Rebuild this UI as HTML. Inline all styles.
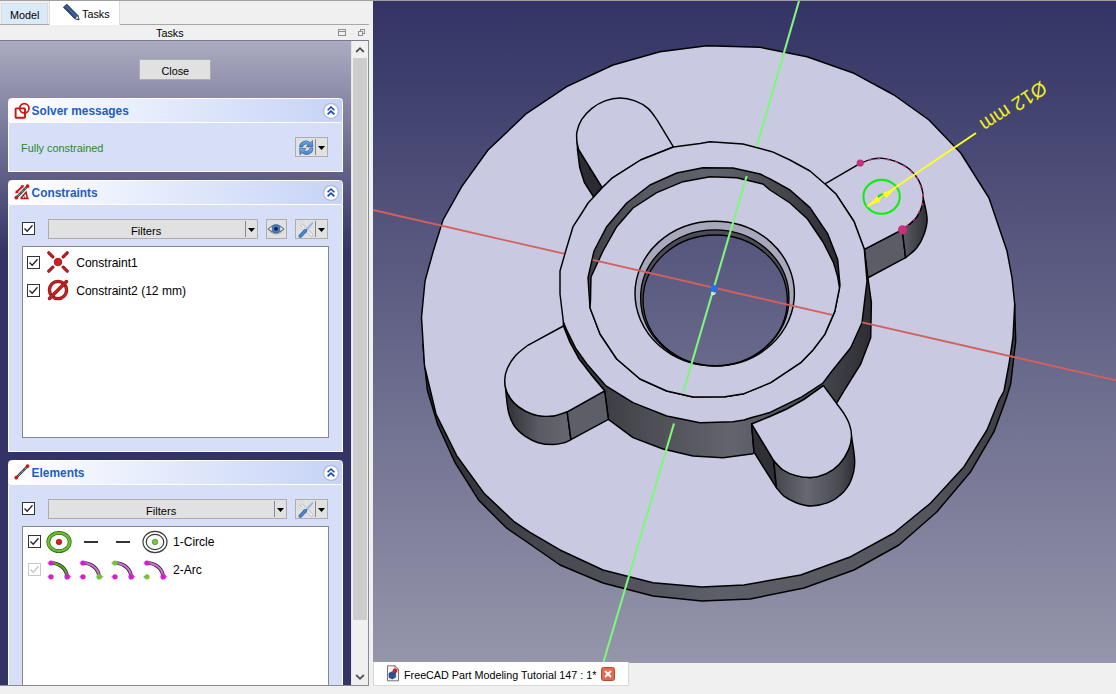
<!DOCTYPE html>
<html><head><meta charset="utf-8"><title>FreeCAD</title>
<style>
html,body{margin:0;padding:0}
body{width:1116px;height:694px;position:relative;overflow:hidden;background:#f0f0f0;font-family:"Liberation Sans",sans-serif;font-size:11px;color:#000}
div,span{box-sizing:content-box}
.abs{position:absolute}
.txt{position:absolute;white-space:nowrap;line-height:1}
#scroll{position:absolute;left:0;top:41px;width:351px;height:644px;overflow:hidden;background:linear-gradient(to bottom,#ababc1 0px,#333365 212px,#333365 100%)}
.ghead{position:absolute;left:8px;width:333px;height:23px;border:1px solid #fff;border-bottom:1px solid #fff;border-radius:3.5px 3.5px 0 0;background:linear-gradient(to right,#ffffff 0%,#c6d3f7 100%)}
.gt{position:absolute;left:22.6px;top:7px;font-weight:bold;color:#215dc6;font-size:11.9px;line-height:1;white-space:nowrap}
.gbody{position:absolute;left:8px;width:333px;background:#d6dff7;border:1px solid #fff;border-top:none}
.tb{position:absolute;height:18px;border:1px solid #adadad;background:#e1e1e1}
.list{position:absolute;left:22px;width:305px;background:#fff;border:1px solid #828790}
.li{position:absolute;font-size:12.05px;line-height:1;white-space:nowrap;color:#000}
</style></head><body>
<!-- top border -->
<div class="abs" style="left:0;top:0;width:1116px;height:1px;background:#a0a0a0"></div>
<!-- tab bar -->
<div class="abs" style="left:0;top:24px;width:369px;height:1px;background:#a6a6a6"></div>
<div class="abs" style="left:1px;top:3px;width:47px;height:21px;background:#d9eaf9;border:1px solid #dadada;border-bottom:none;box-sizing:border-box"></div>
<div class="txt" style="left:10px;top:9.5px;font-size:10.8px">Model</div>
<div class="abs" style="left:49px;top:1px;width:71px;height:24px;background:#fff;border-left:1px solid #dcdcdc;border-right:1px solid #dcdcdc;box-sizing:border-box"></div>
<svg class="abs" style="left:62px;top:3px" width="18" height="18" viewBox="0 0 18 18"><path d="M1.4,4.2 L4.8,1.2 L16,12.6 L17,16.8 L12.6,15.6 Z" fill="#2a4a82" stroke="#1a2a52" stroke-width="0.8"/><path d="M12.6,15.6 L16,12.6 L17,16.8 Z" fill="#ececec" stroke="#333" stroke-width="0.6"/><path d="M15.6,15.4 L17,16.8 L15.2,16.4 Z" fill="#222"/><path d="M3.4,2.6 L14.6,14" stroke="#4c70ac" stroke-width="1.1"/></svg>
<div class="txt" style="left:82px;top:8.5px;font-size:10.8px">Tasks</div>
<!-- dock title -->
<div class="txt" style="left:156px;top:27.5px;font-size:10.8px">Tasks</div>
<svg class="abs" style="left:337px;top:28px" width="10" height="10" viewBox="0 0 10 10"><rect x="1.5" y="1.5" width="7" height="6" fill="none" stroke="#8e8e8e" stroke-width="1"/><path d="M1.5,3.5 h7" stroke="#8e8e8e" stroke-width="1"/></svg>
<svg class="abs" style="left:356px;top:28px" width="10" height="10" viewBox="0 0 10 10"><rect x="4.5" y="1.5" width="4" height="4" fill="none" stroke="#8e8e8e" stroke-width="1"/><rect x="2.5" y="3.5" width="4" height="4" fill="#f0f0f0" stroke="#8e8e8e" stroke-width="1"/></svg>
<!-- scroll area -->
<div class="abs" style="left:0;top:40px;width:369px;height:1px;background:#7a7a8a"></div>
<div id="scroll">
 <div class="tb" style="left:139px;top:18px;width:70px;height:19px;border-color:#adadad"><div class="txt" style="left:21.5px;top:5.8px;font-size:10.8px">Close</div></div>
 <div class="ghead" style="top:57px"><span class="gt">Solver messages</span><svg width="18" height="18" viewBox="0 0 18 18" style="position:absolute;left:5px;top:2.6px"><rect x="1.6" y="6.4" width="9.4" height="9.4" rx="0.8" fill="none" stroke="#cc1414" stroke-width="1.9"/><circle cx="10.3" cy="6.3" r="4.7" fill="none" stroke="#cc1414" stroke-width="1.7"/></svg><svg width="18" height="18" viewBox="0 0 18 18" style="position:absolute;left:313.3px;top:2.6px"><circle cx="9" cy="9" r="7.5" fill="#fff" stroke="#b6bcdc" stroke-width="1.5"/><path d="M5.6,8.3 L9,5 L12.4,8.3 M5.6,12.4 L9,9.1 L12.4,12.4" fill="none" stroke="#1444b8" stroke-width="1.6"/></svg></div><div class="gbody" style="top:82px;height:48px"></div>
 <div class="txt" style="left:21px;top:101.5px;font-size:10.9px;color:#1f8a1f">Fully constrained</div>
 <div class="tb" style="left:295px;top:96px;width:31px"><svg width="16.5" height="17" viewBox="0 0 18 18.4" style="position:absolute;left:1.5px;top:0.6px"><defs><linearGradient id="rf" x1="0" y1="0" x2="0" y2="1"><stop offset="0" stop-color="#7ab0e8"/><stop offset="1" stop-color="#3c7cc8"/></linearGradient></defs><path d="M1.6,8.6 A7,6.6 0 0 1 13.6,4 L15.8,1.6 L16.2,8.8 L9.2,8.4 L11.4,6.2 A3.8,3.4 0 0 0 5.2,8.6 Z" fill="url(#rf)" stroke="#3566a4" stroke-width="0.8"/><path d="M16.4,10.2 A7,6.6 0 0 1 4.4,14.8 L2.2,17.2 L1.8,10 L8.8,10.4 L6.6,12.6 A3.8,3.4 0 0 0 12.8,10.2 Z" fill="url(#rf)" stroke="#3566a4" stroke-width="0.8"/></svg><div style="position:absolute;left:19px;top:1px;width:1px;height:16px;background:#8a8a8a"></div><svg width="7" height="4" viewBox="0 0 7 4" style="position:absolute;left:22px;top:8px"><path d="M0,0 L7,0 L3.5,4 Z" fill="#000"/></svg></div>
 <div class="ghead" style="top:139px"><span class="gt">Constraints</span><svg width="18" height="18" viewBox="0 0 18 18" style="position:absolute;left:5px;top:3px"><path d="M2.3,13.6 L13.6,2.1" stroke="#3a3a3a" stroke-width="2.3"/><path d="M2.3,13.6 L13.6,2.1" stroke="#f4f4f4" stroke-width="1" stroke-dasharray="1 1"/><circle cx="2.3" cy="13.7" r="1.9" fill="#d01414"/><circle cx="13.6" cy="2.1" r="1.9" fill="#d01414"/><path d="M2.6,8 L8.6,2.2" stroke="#dc1010" stroke-width="1.9"/><path d="M1.2,9.4 L1.9,5.9 L4.6,8.7 Z M9.9,0.9 L9.3,4.3 L6.5,1.5 Z" fill="#dc1010"/><path d="M6.6,14.4 L14.8,14.4 M6.6,14.4 L12.7,7.6 M12.2,9 L13.4,14.4" fill="none" stroke="#b41818" stroke-width="1.5"/><path d="M9.2,11.6 Q10.8,12.4 10.9,14.2" fill="none" stroke="#b41818" stroke-width="1"/></svg><svg width="18" height="18" viewBox="0 0 18 18" style="position:absolute;left:313.3px;top:2.6px"><circle cx="9" cy="9" r="7.5" fill="#fff" stroke="#b6bcdc" stroke-width="1.5"/><path d="M5.6,8.3 L9,5 L12.4,8.3 M5.6,12.4 L9,9.1 L12.4,12.4" fill="none" stroke="#1444b8" stroke-width="1.6"/></svg></div><div class="gbody" style="top:164px;height:246px"></div>
 <div style="position:absolute;left:22px;top:181px;width:11px;height:11px;border:1px solid #333;background:#fff"><svg width="13" height="13" viewBox="0 0 13 13" style="position:absolute;left:-1px;top:-1px"><path d="M2.5,6.5 L5.2,9.3 L10.5,3.2" fill="none" stroke="#222" stroke-width="1.3"/></svg></div>
 <div class="tb" style="left:48px;top:178px;width:208px"><div class="txt" style="left:82px;top:6px;font-size:11.1px">Filters</div><div style="position:absolute;left:196px;top:1px;width:1px;height:16px;background:#8a8a8a"></div><svg width="7" height="4" viewBox="0 0 7 4" style="position:absolute;left:199px;top:8px"><path d="M0,0 L7,0 L3.5,4 Z" fill="#000"/></svg></div>
 <div class="tb" style="left:266px;top:178px;width:19px"><svg width="18" height="18" viewBox="0 0 18 18" style="position:absolute;left:0px;top:0px"><path d="M1.2,9.2 Q9,0.8 16.8,9.2 Q9,16.4 1.2,9.2 Z" fill="#fff" stroke="#6e6e6e" stroke-width="1.1"/><path d="M3,11.6 Q9,16.6 15,11.6" fill="none" stroke="#9a9a9a" stroke-width="0.8"/><circle cx="9" cy="8.8" r="4.1" fill="#3f7ccc" stroke="#2a5aa0" stroke-width="0.6"/><circle cx="9" cy="8.8" r="1.9" fill="#1c1c30"/></svg></div>
 <div class="tb" style="left:295px;top:178px;width:31px"><svg width="18" height="18" viewBox="0 0 18 18" style="position:absolute;left:1px;top:0px"><path d="M5.2,5.4 L14.6,15" stroke="#b8b8b8" stroke-width="3.4" stroke-linecap="round"/><path d="M5.2,5.4 L14.6,15" stroke="#ececec" stroke-width="2.2" stroke-linecap="round"/><path d="M6.6,2.2 A3.2,3.2 0 1 0 7.4,7.2" fill="none" stroke="#c4c4c4" stroke-width="2.2"/><path d="M6.6,2.2 A3.2,3.2 0 1 0 7.4,7.2" fill="none" stroke="#efefef" stroke-width="1.1"/><path d="M8.6,10.6 L15.4,3.2" stroke="#8cb4e0" stroke-width="1.8" stroke-linecap="round"/><path d="M3.4,16 L8.4,10.8" stroke="#2c62ac" stroke-width="3.6" stroke-linecap="round"/><path d="M3.4,16 L8.4,10.8" stroke="#4a88d4" stroke-width="2.2" stroke-linecap="round"/></svg><div style="position:absolute;left:19px;top:1px;width:1px;height:16px;background:#8a8a8a"></div><svg width="7" height="4" viewBox="0 0 7 4" style="position:absolute;left:22px;top:8px"><path d="M0,0 L7,0 L3.5,4 Z" fill="#000"/></svg></div>
 <div class="list" style="top:205px;height:190px">
   <div style="position:absolute;left:4px;top:9px;width:11px;height:11px;border:1px solid #333;background:#fff"><svg width="13" height="13" viewBox="0 0 13 13" style="position:absolute;left:-1px;top:-1px"><path d="M2.5,6.5 L5.2,9.3 L10.5,3.2" fill="none" stroke="#222" stroke-width="1.3"/></svg></div><svg width="22" height="22" viewBox="0 0 22 22" style="position:absolute;left:24px;top:4px"><g stroke="#8c1414" stroke-width="3.2" stroke-linecap="round"><path d="M1.8,1.8 L5.8,5.8 M20.2,1.8 L16.2,5.8 M1.8,20.2 L5.8,16.2 M20.2,20.2 L16.2,16.2"/></g><g stroke="#cc2222" stroke-width="1.5" stroke-linecap="round"><path d="M1.8,1.8 L5.8,5.8 M20.2,1.8 L16.2,5.8 M1.8,20.2 L5.8,16.2 M20.2,20.2 L16.2,16.2"/></g><circle cx="11" cy="11" r="3.8" fill="#d41e1e" stroke="#8c1414" stroke-width="0.8"/></svg><div class="li" style="left:53.2px;top:10px">Constraint1</div>
   <div style="position:absolute;left:4px;top:37px;width:11px;height:11px;border:1px solid #333;background:#fff"><svg width="13" height="13" viewBox="0 0 13 13" style="position:absolute;left:-1px;top:-1px"><path d="M2.5,6.5 L5.2,9.3 L10.5,3.2" fill="none" stroke="#222" stroke-width="1.3"/></svg></div><svg width="22" height="22" viewBox="0 0 22 22" style="position:absolute;left:24px;top:32px"><circle cx="11" cy="11" r="8.6" fill="none" stroke="#8c1414" stroke-width="3.4"/><circle cx="11" cy="11" r="8.6" fill="none" stroke="#cc2222" stroke-width="1.9"/><path d="M2.5,19.5 L19.5,2.5" stroke="#8c1414" stroke-width="3.4" stroke-linecap="round"/><path d="M2.5,19.5 L19.5,2.5" stroke="#cc2222" stroke-width="1.9" stroke-linecap="round"/></svg><div class="li" style="left:53.2px;top:38px">Constraint2 (12 mm)</div>
 </div>
 <div class="ghead" style="top:419px"><span class="gt">Elements</span><svg width="18" height="18" viewBox="0 0 18 18" style="position:absolute;left:5px;top:3px"><path d="M2.3,13.6 L13.6,2.1" stroke="#3a3a3a" stroke-width="2.3"/><path d="M2.3,13.6 L13.6,2.1" stroke="#f4f4f4" stroke-width="1" stroke-dasharray="1 1"/><circle cx="2.3" cy="13.7" r="1.9" fill="#d01414"/><circle cx="13.6" cy="2.1" r="1.9" fill="#d01414"/></svg><svg width="18" height="18" viewBox="0 0 18 18" style="position:absolute;left:313.3px;top:2.6px"><circle cx="9" cy="9" r="7.5" fill="#fff" stroke="#b6bcdc" stroke-width="1.5"/><path d="M5.6,8.3 L9,5 L12.4,8.3 M5.6,12.4 L9,9.1 L12.4,12.4" fill="none" stroke="#1444b8" stroke-width="1.6"/></svg></div><div class="gbody" style="top:444px;height:230px"></div>
 <div style="position:absolute;left:22px;top:461px;width:11px;height:11px;border:1px solid #333;background:#fff"><svg width="13" height="13" viewBox="0 0 13 13" style="position:absolute;left:-1px;top:-1px"><path d="M2.5,6.5 L5.2,9.3 L10.5,3.2" fill="none" stroke="#222" stroke-width="1.3"/></svg></div>
 <div class="tb" style="left:48px;top:458px;width:237px"><div class="txt" style="left:97px;top:6px;font-size:11.1px">Filters</div><div style="position:absolute;left:225px;top:1px;width:1px;height:16px;background:#8a8a8a"></div><svg width="7" height="4" viewBox="0 0 7 4" style="position:absolute;left:228px;top:8px"><path d="M0,0 L7,0 L3.5,4 Z" fill="#000"/></svg></div>
 <div class="tb" style="left:295px;top:458px;width:31px"><svg width="18" height="18" viewBox="0 0 18 18" style="position:absolute;left:1px;top:0px"><path d="M5.2,5.4 L14.6,15" stroke="#b8b8b8" stroke-width="3.4" stroke-linecap="round"/><path d="M5.2,5.4 L14.6,15" stroke="#ececec" stroke-width="2.2" stroke-linecap="round"/><path d="M6.6,2.2 A3.2,3.2 0 1 0 7.4,7.2" fill="none" stroke="#c4c4c4" stroke-width="2.2"/><path d="M6.6,2.2 A3.2,3.2 0 1 0 7.4,7.2" fill="none" stroke="#efefef" stroke-width="1.1"/><path d="M8.6,10.6 L15.4,3.2" stroke="#8cb4e0" stroke-width="1.8" stroke-linecap="round"/><path d="M3.4,16 L8.4,10.8" stroke="#2c62ac" stroke-width="3.6" stroke-linecap="round"/><path d="M3.4,16 L8.4,10.8" stroke="#4a88d4" stroke-width="2.2" stroke-linecap="round"/></svg><div style="position:absolute;left:19px;top:1px;width:1px;height:16px;background:#8a8a8a"></div><svg width="7" height="4" viewBox="0 0 7 4" style="position:absolute;left:22px;top:8px"><path d="M0,0 L7,0 L3.5,4 Z" fill="#000"/></svg></div>
 <div class="list" style="top:485px;height:200px">
   <div style="position:absolute;left:5px;top:8px;width:11px;height:11px;border:1px solid #333;background:#fff"><svg width="13" height="13" viewBox="0 0 13 13" style="position:absolute;left:-1px;top:-1px"><path d="M2.5,6.5 L5.2,9.3 L10.5,3.2" fill="none" stroke="#222" stroke-width="1.3"/></svg></div><svg width="26" height="26" viewBox="-13 -13 26 26" style="position:absolute;left:23px;top:2px"><ellipse rx="10.7" ry="9.1" fill="#fff" stroke="#2e6a12" stroke-width="3.8"/><ellipse rx="10.7" ry="9.1" fill="none" stroke="#6cc030" stroke-width="2.3"/><circle r="2.8" fill="#d42020" stroke="#7a1010" stroke-width="0.6"/></svg>
   <div class="abs" style="left:61px;top:14px;width:14px;height:2px;background:#333"></div>
   <div class="abs" style="left:92.5px;top:14px;width:14px;height:2px;background:#333"></div>
   <svg width="26" height="26" viewBox="-13 -13 26 26" style="position:absolute;left:119px;top:2px"><ellipse rx="12" ry="10.6" fill="#fff" stroke="#3c3c3c" stroke-width="1.2"/><ellipse rx="8.8" ry="7.6" fill="#fff" stroke="#3c3c3c" stroke-width="1.2"/><circle r="2.8" fill="#78c838" stroke="#3a7a14" stroke-width="0.6"/></svg><div class="li" style="left:150px;top:9.4px">1-Circle</div>
   <div style="position:absolute;left:5px;top:36px;width:11px;height:11px;border:1px solid #c8c8c8;background:#fff"><svg width="13" height="13" viewBox="0 0 13 13" style="position:absolute;left:-1px;top:-1px"><path d="M2.5,6.5 L5.2,9.3 L10.5,3.2" fill="none" stroke="#c4c4c4" stroke-width="1.3"/></svg></div><svg width="26" height="22" viewBox="0 0 26 22" style="position:absolute;left:24px;top:32px"><path d="M4,4 A16,14 0 0 1 20,17" fill="none" stroke="#3a2a3a" stroke-width="3.6"/><path d="M4,4 A16,14 0 0 1 20,17" fill="none" stroke="#58b020" stroke-width="2"/><circle cx="4" cy="4" r="2.6" fill="#d020d0"/><circle cx="4" cy="17.8" r="2.6" fill="#d020d0"/><circle cx="20.2" cy="17.8" r="2.8" fill="#d020d0"/><path d="M0.5,4 h1.5 M0.5,17.8 h1.5 M22.8,17.8 h1.5" stroke="#d020d0" stroke-width="0.8"/></svg><svg width="26" height="22" viewBox="0 0 26 22" style="position:absolute;left:56px;top:32px"><path d="M4,4 A16,14 0 0 1 20,17" fill="none" stroke="#3a2a3a" stroke-width="3.6"/><path d="M4,4 A16,14 0 0 1 20,17" fill="none" stroke="#d070d8" stroke-width="2"/><circle cx="4" cy="4" r="2.6" fill="#d020d0"/><circle cx="4" cy="17.8" r="2.6" fill="#d020d0"/><circle cx="20.2" cy="17.8" r="2.8" fill="#70c830"/><path d="M0.5,4 h1.5 M0.5,17.8 h1.5 M22.8,17.8 h1.5" stroke="#d020d0" stroke-width="0.8"/></svg><svg width="26" height="22" viewBox="0 0 26 22" style="position:absolute;left:88px;top:32px"><path d="M4,4 A16,14 0 0 1 20,17" fill="none" stroke="#3a2a3a" stroke-width="3.6"/><path d="M4,4 A16,14 0 0 1 20,17" fill="none" stroke="#d070d8" stroke-width="2"/><circle cx="4" cy="4" r="2.6" fill="#70c830"/><circle cx="4" cy="17.8" r="2.6" fill="#d020d0"/><circle cx="20.2" cy="17.8" r="2.8" fill="#d020d0"/><path d="M0.5,4 h1.5 M0.5,17.8 h1.5 M22.8,17.8 h1.5" stroke="#d020d0" stroke-width="0.8"/></svg><svg width="26" height="22" viewBox="0 0 26 22" style="position:absolute;left:120px;top:32px"><path d="M4,4 A16,14 0 0 1 20,17" fill="none" stroke="#3a2a3a" stroke-width="3.6"/><path d="M4,4 A16,14 0 0 1 20,17" fill="none" stroke="#d070d8" stroke-width="2"/><circle cx="4" cy="4" r="2.6" fill="#d020d0"/><circle cx="4" cy="17.8" r="2.6" fill="#70c830"/><circle cx="20.2" cy="17.8" r="2.8" fill="#d020d0"/><path d="M0.5,4 h1.5 M0.5,17.8 h1.5 M22.8,17.8 h1.5" stroke="#d020d0" stroke-width="0.8"/></svg>
   <div class="li" style="left:150px;top:37.4px">2-Arc</div>
 </div>
</div>
<!-- scrollbar -->
<div class="abs" style="left:351px;top:41px;width:18px;height:644px;background:#f0f0f0;border-left:1px solid #e6e6e6;border-right:1px solid #8a8a96;box-sizing:border-box"></div>
<div class="abs" style="left:353px;top:58px;width:14px;height:562px;background:#cdcdcd"></div>
<svg class="abs" style="left:355px;top:46px" width="10" height="8" viewBox="0 0 10 8"><path d="M1.2,6 L5,2.2 L8.8,6" fill="none" stroke="#505050" stroke-width="1.8"/></svg>
<svg class="abs" style="left:355px;top:672.7px" width="10" height="8" viewBox="0 0 10 8"><path d="M1.2,2 L5,5.8 L8.8,2" fill="none" stroke="#505050" stroke-width="1.8"/></svg>
<div class="abs" style="left:0;top:685px;width:369px;height:1px;background:#8a8a96"></div>
<!-- viewport -->
<svg id="vp" width="743" height="661.6" viewBox="373 1 743 661.6" style="position:absolute;left:373px;top:1px">
<defs>
<linearGradient id="bg" gradientUnits="userSpaceOnUse" x1="0" y1="1" x2="0" y2="662"><stop offset="0" stop-color="#333365"/><stop offset="1" stop-color="#9595ab"/></linearGradient>
<linearGradient id="wallD" gradientUnits="userSpaceOnUse" x1="420" y1="0" x2="1016" y2="0"><stop offset="0" stop-color="#2c2c32"/><stop offset="0.2" stop-color="#46464e"/><stop offset="0.5" stop-color="#5e5e68"/><stop offset="0.85" stop-color="#55555d"/><stop offset="1" stop-color="#3a3a40"/></linearGradient>
<linearGradient id="wallH" gradientUnits="userSpaceOnUse" x1="560" y1="0" x2="872" y2="0"><stop offset="0" stop-color="#2a2a30"/><stop offset="0.25" stop-color="#4a4a52"/><stop offset="0.55" stop-color="#64646e"/><stop offset="0.8" stop-color="#4c4c54"/><stop offset="1" stop-color="#2c2c32"/></linearGradient>
<linearGradient id="wallI" gradientUnits="userSpaceOnUse" x1="590" y1="0" x2="840" y2="0"><stop offset="0" stop-color="#404047"/><stop offset="0.22" stop-color="#595963"/><stop offset="0.5" stop-color="#62626c"/><stop offset="0.75" stop-color="#494950"/><stop offset="1" stop-color="#2a2a30"/></linearGradient>
<linearGradient id="wBL" gradientUnits="userSpaceOnUse" x1="505" y1="0" x2="572" y2="0"><stop offset="0" stop-color="#2e2e34"/><stop offset="0.5" stop-color="#5a5a64"/><stop offset="1" stop-color="#686872"/></linearGradient>
<linearGradient id="wBR" gradientUnits="userSpaceOnUse" x1="774" y1="0" x2="856" y2="0"><stop offset="0" stop-color="#44444c"/><stop offset="0.4" stop-color="#686872"/><stop offset="0.8" stop-color="#4a4a52"/><stop offset="1" stop-color="#2c2c32"/></linearGradient>
<linearGradient id="wTR" gradientUnits="userSpaceOnUse" x1="902" y1="0" x2="928" y2="0"><stop offset="0" stop-color="#5c5c66"/><stop offset="1" stop-color="#2e2e34"/></linearGradient>
</defs>
<rect x="373" y="1" width="743" height="662" fill="url(#bg)"/>
<g stroke="#000" stroke-width="1.45" stroke-linejoin="round" stroke-linecap="round">
<polygon points="423.0,345.0 424.8,366.0 427.3,390.0 437.7,424.5 455.0,462.5 479.0,500.6 506.8,528.2 524.0,540.0 560.0,565.0 603.0,583.0 653.0,596.0 701.7,601.0 750.0,599.0 804.0,588.0 854.0,570.0 899.0,545.0 937.0,511.7 970.7,471.7 994.0,431.7 1005.7,400.0 1010.7,384.0 1015.7,341.0 1014.7,304.0 900.0,300.0 500.0,300.0" fill="url(#wallD)"/>
<polygon points="433.3,251.0 443.0,220.0 461.7,186.7 488.0,150.0 526.7,113.3 566.7,86.7 613.0,65.0 660.0,51.7 706.7,45.7 760.0,47.3 807.0,56.7 854.0,73.3 894.0,95.0 929.0,120.0 960.7,153.0 989.0,198.0 1007.0,251.0 1012.0,277.7 1014.7,304.0 1013.0,337.7 1009.0,364.0 1004.0,391.0 999.0,400.0 987.0,430.0 964.0,466.7 930.7,503.0 894.0,533.0 850.7,556.7 800.7,575.0 744.0,585.0 701.7,587.0 653.0,582.7 603.0,570.0 560.0,550.0 530.0,532.4 513.7,521.3 484.3,493.6 456.7,455.6 436.0,414.0 424.5,365.7 421.5,317.5 425.0,281.0" fill="#c9c9e1"/>
<polygon points="576.9,136.0 578.7,149.7 602.2,187.7 593.7,197.1 584.4,182.5 579.7,167.5 577.5,150.0" fill="#2b2b31"/>
<path d="M673.4,146.8 L657.5,120.6 L657.5,120.6 C655.9,118.6 651.8,111.7 648.0,108.4 C644.2,105.1 639.7,102.6 635.0,100.9 C630.3,99.2 625.0,98.1 620.0,98.1 C615.0,98.1 609.7,99.2 605.0,100.9 C600.3,102.6 595.8,105.3 591.9,108.4 C588.0,111.5 584.1,115.8 581.6,119.7 C579.1,123.6 577.7,128.3 576.9,131.9 C576.1,135.5 576.6,138.2 576.9,141.2 C577.2,144.2 578.4,148.3 578.7,149.7 L602.2,187.7 L612.5,177.8 L640.6,160.0 Z" fill="#c9c9e1"/>
<polygon points="864.3,249.3 902.2,229.6 905.6,257.7 867.5,278.0" fill="#5c5c66"/>
<path d="M902.2,229.6 C903.4,228.7 906.9,226.4 909.3,224.3 C911.7,222.2 914.6,220.1 916.8,216.8 C919.0,213.5 921.3,207.8 922.4,204.7 C923.5,201.6 923.1,199.1 923.2,198.0 L923.2,198.0 C923.9,201.4 926.9,212.8 927.1,218.7 C927.3,224.6 926.0,228.8 924.3,233.7 C922.6,238.5 919.9,243.8 916.8,247.8 C913.7,251.8 907.5,256.1 905.6,257.7 Z" fill="url(#wTR)"/>
<path d="M825.0,184.0 L860.2,163.4 L860.2,163.4 C862.1,162.7 868.0,159.9 871.8,159.1 C875.6,158.3 878.9,158.0 883.0,158.4 C887.1,158.8 891.8,159.8 896.2,161.6 C900.6,163.4 905.5,165.9 909.3,169.0 C913.0,172.1 916.5,176.4 918.7,180.3 C921.0,184.2 922.2,188.4 922.8,192.5 C923.4,196.6 923.4,200.6 922.4,204.7 C921.4,208.8 919.0,213.5 916.8,216.8 C914.6,220.1 911.7,222.2 909.3,224.3 C906.9,226.4 903.4,228.7 902.2,229.6 L864.3,249.3 L854.0,221.5 L836.2,194.3 Z" fill="#c9c9e1"/>
<polygon points="563.4,322.0 563.4,326.0 570.0,342.5 579.3,359.4 592.5,376.2 604.6,390.8 608.4,419.3 633.0,437.7 663.0,449.0 693.0,456.0 723.0,457.7 753.0,453.7 754.0,452.2 751.6,424.0 770.0,416.5 786.8,409.0 803.7,399.7 823.4,385.6 836.5,403.4 844.0,391.0 860.7,364.0 870.7,337.7 871.4,302.7 868.0,278.0 864.3,249.3 800.0,250.0 620.0,250.0" fill="url(#wallH)"/>
<path d="M504.7,380.0 C505.0,381.9 505.1,387.4 506.6,391.2 C508.1,394.9 510.6,399.2 513.7,402.5 C516.8,405.8 520.9,408.7 525.0,410.9 C529.1,413.1 533.4,414.8 538.1,415.6 C542.8,416.5 548.2,416.6 553.1,416.0 C558.0,415.4 564.9,412.5 567.2,411.8 L570.9,439.6 C569.8,440.1 567.3,441.9 564.3,442.7 C561.3,443.5 557.5,444.6 553.1,444.6 C548.7,444.6 542.8,444.1 538.1,442.7 C533.4,441.3 529.1,439.1 525.0,436.2 C520.9,433.2 516.5,429.4 513.7,425.0 C510.9,420.6 509.6,417.5 508.1,410.0 C506.6,402.5 505.3,385.0 504.7,380.0 Z" fill="url(#wBL)"/>
<polygon points="567.2,411.8 604.6,390.8 608.4,419.3 570.9,439.6" fill="#5e5e68"/>
<path d="M563.4,326.0 L527.8,345.3 L527.8,345.3 C525.8,347.0 519.0,351.7 515.6,355.6 C512.2,359.5 509.0,364.6 507.2,368.7 C505.4,372.8 504.8,376.2 504.7,380.0 C504.6,383.8 505.1,387.4 506.6,391.2 C508.1,394.9 510.6,399.2 513.7,402.5 C516.8,405.8 520.9,408.7 525.0,410.9 C529.1,413.1 533.4,414.8 538.1,415.6 C542.8,416.5 548.2,416.6 553.1,416.0 C558.0,415.4 564.9,412.5 567.2,411.8 L604.6,390.8 L592.5,376.2 L579.3,359.4 L570.0,342.5 Z" fill="#c9c9e1"/>
<polygon points="751.6,424.0 773.7,460.6 776.5,487.8 754.0,452.2" fill="#2f2f35"/>
<path d="M773.7,460.6 C775.3,462.2 779.4,467.5 783.1,470.0 C786.9,472.5 791.5,474.4 796.2,475.6 C800.9,476.9 806.2,477.8 811.2,477.5 C816.2,477.2 821.5,475.9 826.2,473.7 C830.9,471.5 835.5,468.4 839.3,464.3 C843.0,460.2 846.7,454.0 848.7,449.3 C850.7,444.6 851.0,438.4 851.5,436.2 L851.5,436.2 C852.0,440.6 854.9,455.0 854.7,462.5 C854.6,470.0 852.9,475.9 850.6,481.2 C848.4,486.5 845.0,490.7 841.2,494.3 C837.4,497.9 833.0,500.8 828.0,502.7 C823.0,504.6 816.5,506.0 811.2,506.0 C805.9,506.0 800.7,504.3 796.2,502.7 C791.7,501.1 787.3,498.7 784.0,496.2 C780.7,493.7 777.8,489.2 776.5,487.8 Z" fill="url(#wBR)"/>
<path d="M751.6,424.0 L773.7,460.6 L773.7,460.6 C775.3,462.2 779.4,467.5 783.1,470.0 C786.9,472.5 791.5,474.4 796.2,475.6 C800.9,476.9 806.2,477.8 811.2,477.5 C816.2,477.2 821.5,475.9 826.2,473.7 C830.9,471.5 835.5,468.4 839.3,464.3 C843.0,460.2 846.7,454.0 848.7,449.3 C850.7,444.6 851.4,440.2 851.5,436.2 C851.6,432.1 850.9,428.8 849.6,425.0 C848.4,421.2 846.2,417.3 844.0,413.7 C841.8,410.1 837.8,405.1 836.5,403.4 L823.4,385.6 L803.7,399.7 L786.8,409.0 L770.0,416.5 Z" fill="#c9c9e1"/>
<polygon points="565.7,251.0 573.0,226.7 580.6,215.0 588.1,203.0 602.2,187.7 612.5,177.8 640.6,160.0 673.4,147.0 700.0,143.5 710.0,141.7 743.0,144.0 772.0,151.7 790.0,160.0 810.0,171.0 825.0,184.0 836.2,194.3 854.0,221.5 864.3,249.3 867.0,281.0 862.0,322.7 850.7,347.7 832.0,371.0 823.0,383.0 801.8,396.9 769.0,412.8 751.0,417.7 744.0,420.0 733.0,421.7 700.0,422.7 666.7,416.0 633.0,402.7 605.6,385.6 586.8,364.0 575.6,348.1 567.2,331.2 563.4,322.0 560.0,294.0 560.0,271.0" fill="#c9c9e1"/>
<polygon points="594.0,251.0 606.7,226.7 626.7,203.0 650.0,185.0 676.7,173.0 703.0,167.7 733.0,168.0 760.0,174.0 770.0,178.8 790.0,190.0 810.0,207.6 827.6,233.6 837.7,259.5 840.0,285.4 834.8,311.4 824.8,334.4 813.0,350.0 800.7,362.7 770.7,382.7 744.0,393.7 725.0,396.7 693.0,397.0 666.7,391.0 640.0,379.0 616.7,359.0 600.0,334.0 590.0,307.7 588.0,277.7" fill="url(#wallI)"/>
<polygon points="590.5,300.0 591.0,277.0 603.0,251.0 616.7,226.7 633.0,208.0 656.7,192.7 683.0,181.7 710.0,176.7 736.7,177.7 763.0,184.0 770.0,190.0 790.0,203.0 807.5,219.0 823.0,242.0 833.4,262.4 837.7,276.8 839.5,288.0 834.8,311.4 824.8,334.4 813.0,350.0 800.7,362.7 770.7,382.7 744.0,393.7 725.0,396.7 693.0,397.0 666.7,391.0 640.0,379.0 616.7,359.0 600.0,334.0 590.0,307.7" fill="#c9c9e1"/>
<ellipse cx="714.7" cy="293.6" rx="79.7" ry="72.4" fill="#a8a8bc"/>
<ellipse cx="714.8" cy="297.9" rx="74.2" ry="68.1" fill="#4c4c57" stroke-width="1.3"/>
<ellipse cx="715.2" cy="300.3" rx="72.1" ry="65.3" fill="url(#bg)" stroke-width="1.3"/>
</g>
<g fill="none" stroke-linecap="butt">
<path d="M373,210 L564,253.7 M592.7,260 L832,314.8 M862.2,322.3 L1116,380.4" stroke="#d4605c" stroke-width="1.8"/>
<path d="M799,1 L756.7,146.7 M746.7,176 L683,392.7 M674,423.5 L603.5,662" stroke="#7ef67e" stroke-width="2.1"/>
</g>
<circle cx="714" cy="288.5" r="3.6" fill="#2070f0"/><path d="M711,293 l5,0 M712,295 l3,-1" stroke="#fff" stroke-width="1" fill="none"/>
<polyline points="860.2,163.4 871.8,159.1 883.0,158.4 896.2,161.6 909.3,169.0 918.7,180.3 922.8,192.5 922.4,204.7 916.8,216.8 909.3,224.3 902.2,229.6" fill="none" stroke="#d02c7c" stroke-width="1.5" stroke-dasharray="3 6"/>
<circle cx="860.2" cy="163" r="3.6" fill="#c8307c"/><circle cx="902.6" cy="229.8" r="4.6" fill="#c8307c"/>
<ellipse cx="881.6" cy="196.8" rx="18.2" ry="16.9" fill="none" stroke="#10ee10" stroke-width="2.1"/>
<ellipse cx="881.2" cy="195.8" rx="4.2" ry="2" transform="rotate(-22 881.2 195.8)" fill="#10e030"/>
<g fill="#ffff20" stroke="none"><path d="M867.2,206.5 L976,133" stroke="#ffff20" stroke-width="2" fill="none"/>
<polygon points="867.2,206.5 877.2,196.2 880.6,201.2"/><polygon points="896.4,187.6 886.4,197.9 883,192.9"/></g>
<text transform="translate(1009.8,101) rotate(147)" text-anchor="middle" font-family="Liberation Sans, sans-serif" font-size="19.6" fill="#efef1c">Ø12 mm</text>
</svg>
<!-- bottom tab -->
<div class="abs" style="left:373px;top:662px;width:256px;height:24px;background:#fff;border:1px solid #d9d9d9;border-top:none;box-sizing:border-box"></div>
<svg class="abs" style="left:386px;top:665px" width="14" height="17" viewBox="0 0 14 17"><path d="M1.5,0.8 H9 L12.5,4.2 V15.8 H1.5 Z" fill="#f4f4f4" stroke="#666" stroke-width="0.9"/><path d="M9,0.8 V4.2 H12.5" fill="none" stroke="#666" stroke-width="0.8"/><path d="M3,8.2 L6.5,6.6 L9.6,8 L9.6,12.2 L6.2,14 L3,12.4 Z" fill="#2c5ca8" stroke="#183464" stroke-width="0.6"/><path d="M3,8.2 L6.2,9.8 L9.6,8 M6.2,9.8 V14" stroke="#183464" stroke-width="0.6" fill="none"/><circle cx="9" cy="5.8" r="2.4" fill="#d82020"/></svg>
<div class="txt" style="left:404px;top:669.5px;font-size:10.75px">FreeCAD Part Modeling Tutorial 147 : 1*</div>
<svg class="abs" style="left:601px;top:667px" width="14" height="14" viewBox="0 0 14 14"><rect x="0.5" y="0.5" width="13" height="13" rx="2" fill="#e4694c" stroke="#b84a30" stroke-width="1"/><path d="M4,4 L10,10 M10,4 L4,10" stroke="#fff" stroke-width="2"/></svg>
</body></html>
